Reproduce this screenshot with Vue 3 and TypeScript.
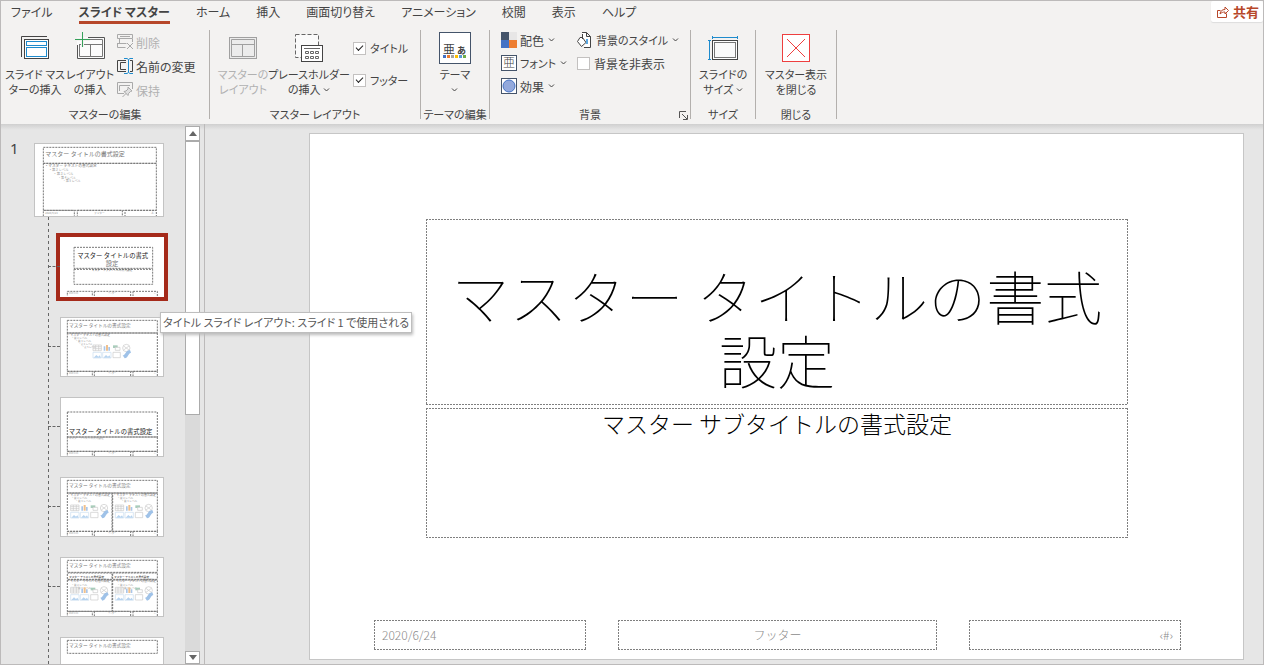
<script setup lang="ts">
import { ref } from 'vue'

interface Line { x: number; y: number; size: number; text: string; anchor?: 'start' | 'middle' | 'end'; tone?: string }
interface Box { x: number; y: number; w: number; h: number }
interface Layout { id: string; boxes: Box[]; lines: Line[]; media: { x: number; y: number }[] }

const tabs = ['ファイル', 'スライド マスター', 'ホーム', '挿入', '画面切り替え', 'アニメーション', '校閲', '表示', 'ヘルプ']
const activeTab = ref('スライド マスター')
const showTitle = ref(true)
const showFooter = ref(true)
const hideBackground = ref(false)
const selected = ref('title')

const heading = 'マスター タイトルの書式設定'
const body = 'マスター テキストの書式設定'

const footerBoxes: Box[] = [
  { x: 22, y: 163, w: 75, h: 20 },
  { x: 103, y: 163, w: 109, h: 20 },
  { x: 219, y: 163, w: 73, h: 20 },
]
const footerLines: Line[] = [
  { x: 26, y: 172, size: 6, text: '2020/6/24', tone: 'faint' },
  { x: 156, y: 172, size: 6, text: 'フッター', anchor: 'middle', tone: 'faint' },
  { x: 288, y: 172, size: 6, text: '‹#›', anchor: 'end', tone: 'faint' },
]

function outline(x: number, y: number, levels: number): Line[] {
  const all: Line[] = [
    { x, y, size: 9, text: '・' + body },
    { x: x + 12, y: y + 10, size: 8, text: '・第 2 レベル', tone: 'faint' },
    { x: x + 24, y: y + 19, size: 8, text: '・第 3 レベル', tone: 'faint' },
    { x: x + 34, y: y + 28, size: 7, text: '・第 4 レベル', tone: 'faint' },
    { x: x + 44, y: y + 37, size: 7, text: '・第 5 レベル', tone: 'faint' },
  ]
  return all.slice(0, levels)
}

const layouts: Layout[] = [
  {
    id: 'title',
    boxes: [{ x: 42, y: 31, w: 236, h: 63 }, { x: 42, y: 97, w: 236, h: 45 }, ...footerBoxes],
    lines: [
      { x: 158, y: 64, size: 19, text: 'マスター タイトルの書式', anchor: 'middle', tone: 'strong' },
      { x: 156, y: 88, size: 19, text: '設定', anchor: 'middle' },
      { x: 156, y: 102, size: 8, text: 'マスター サブタイトルの書式設定', anchor: 'middle' },
      ...footerLines,
    ],
    media: [],
  },
  {
    id: 'content',
    boxes: [{ x: 22, y: 10, w: 270, h: 38 }, { x: 22, y: 48, w: 270, h: 115 }, ...footerBoxes],
    lines: [{ x: 27, y: 30, size: 14, text: heading }, ...outline(22, 57, 5), ...footerLines],
    media: [{ x: 98, y: 83 }],
  },
  {
    id: 'section',
    boxes: [{ x: 22, y: 45, w: 270, h: 75 }, { x: 22, y: 120, w: 270, h: 43 }, ...footerBoxes],
    lines: [
      { x: 26, y: 111, size: 19, text: heading, tone: 'strong' },
      { x: 26, y: 127, size: 8, text: body, tone: 'faint' },
      ...footerLines,
    ],
    media: [],
  },
  {
    id: 'two',
    boxes: [{ x: 22, y: 10, w: 270, h: 38 }, { x: 22, y: 48, w: 134, h: 115 }, { x: 158, y: 48, w: 134, h: 115 }, ...footerBoxes],
    lines: [{ x: 27, y: 30, size: 14, text: heading }, ...outline(22, 57, 3), ...outline(160, 57, 3), ...footerLines],
    media: [{ x: 31, y: 83 }, { x: 165, y: 83 }],
  },
  {
    id: 'compare',
    boxes: [
      { x: 22, y: 10, w: 270, h: 36 },
      { x: 22, y: 48, w: 134, h: 19 }, { x: 158, y: 48, w: 134, h: 19 },
      { x: 22, y: 69, w: 134, h: 94 }, { x: 158, y: 69, w: 134, h: 94 }, ...footerBoxes,
    ],
    lines: [
      { x: 27, y: 30, size: 14, text: heading },
      { x: 27, y: 63, size: 8, text: body, tone: 'strong' },
      { x: 162, y: 63, size: 8, text: body, tone: 'strong' },
      ...outline(22, 76, 3), ...outline(160, 76, 3), ...footerLines,
    ],
    media: [{ x: 31, y: 90 }, { x: 165, y: 90 }],
  },
  {
    id: 'titleonly',
    boxes: [{ x: 22, y: 10, w: 270, h: 39 }, ...footerBoxes],
    lines: [{ x: 27, y: 30, size: 14, text: heading }],
    media: [],
  },
]

const masterBoxes: Box[] = [
  { x: 28, y: 13, w: 339, h: 48 },
  { x: 28, y: 61, w: 339, h: 141 },
  { x: 28, y: 202, w: 93, h: 24 },
  { x: 130, y: 202, w: 135, h: 24 },
  { x: 273, y: 202, w: 94, h: 24 },
]
const masterLines: Line[] = [
  { x: 34, y: 39, size: 18, text: heading },
  { x: 32, y: 72, size: 11, text: '・' + body },
  { x: 44, y: 84, size: 10, text: '・第 2 レベル', tone: 'faint' },
  { x: 58, y: 96, size: 10, text: '・第 3 レベル', tone: 'faint' },
  { x: 72, y: 108, size: 9, text: '・第 4 レベル', tone: 'faint' },
  { x: 86, y: 118, size: 9, text: '・第 5 レベル', tone: 'faint' },
  { x: 34, y: 213, size: 8, text: '2020/6/24', tone: 'faint' },
  { x: 196, y: 213, size: 8, text: 'フッター', anchor: 'middle', tone: 'faint' },
  { x: 360, y: 213, size: 8, text: '‹#›', anchor: 'end', tone: 'faint' },
]
</script>

<template>
  <div class="app">
    <header class="ribbon">
      <div class="tabbar">
        <nav class="tabs">
          <button v-for="t in tabs" :key="t" class="tab" :class="{ active: t === activeTab }" @click="activeTab = t">{{ t }}</button>
        </nav>
        <button class="share">
          <svg width="12" height="12" viewBox="0 0 12 12" fill="none" stroke="currentColor"><path d="M3.5 4.5h-3v7h9v-4M3 8c.5-3 2-4.500 5-4.500V1l3.500 3.500L8 8V6C6 6 4.500 6.500 3 8z" /></svg>
          <span>共有</span>
        </button>
      </div>

      <div class="groups">
        <section class="group g-edit">
          <div class="tools">
            <button class="big">
              <svg class="ico" viewBox="0 0 30 30" fill="none">
                <path d="M1.500 25V4.500H27" stroke="#444" />
                <rect x="4.500" y="7.500" width="24" height="19" fill="#fff" stroke="#444" />
                <rect x="6.500" y="9.500" width="20" height="4" stroke="#1e8bcd" />
                <rect x="6.500" y="15.500" width="20" height="9" stroke="#1e8bcd" />
              </svg>
              <span>スライド マス<br>ターの挿入</span>
            </button>
            <button class="big narrow">
              <svg class="ico" viewBox="0 0 30 30" fill="none">
                <rect x="2" y="5" width="28" height="22" fill="#fbfbfb" />
                <path d="M13 5.500h16.500v21H2.500V13" stroke="#555" />
                <path d="M10 7.500h17.500v17h-23V12M4 12.500h24M15.500 12.500v12" stroke="#777" />
                <path d="M7.500 0v15M0 7.500h15" stroke="#f3f2f1" stroke-width="3" />
                <path d="M7.500 0v15M0 7.500h15" stroke="#35a05a" />
              </svg>
              <span>レイアウト<br>の挿入</span>
            </button>
            <div class="stack wide">
              <button class="small" disabled>
                <svg class="mini" viewBox="0 0 16 16" fill="none" stroke="#a9a9a9"><path d="M.5.500h15v4H.5zM3 2.500h10M2.500 5v4M15.500 5v3M.5 9.500h9M.5 9v4.500h8M10 9l6 6M16 9l-6 6" /></svg>
                削除
              </button>
              <button class="small">
                <svg class="mini" viewBox="0 0 16 16" fill="none"><path d="M9 2.500H.5v11H9M9 4.500H3.500v7H9M13 2.500h2.500v11H13" stroke="#444" /><path d="M7 .5h3l1.500 1 1.500-1h3M11.500 1.500v13M7 15.500h3l1.500-1 1.500 1h3" stroke="#1e8bcd" /></svg>
                名前の変更
              </button>
              <button class="small" disabled>
                <svg class="mini" viewBox="0 0 16 16" fill="none" stroke="#a9a9a9"><path d="M7 11.500H.5V.500h15V7M2.500 9V3.500H13" /><path d="M11 5l4 4-1.500.500-2 2-.5 2-4-4 2-.500 2-2zM9 11.500L5.500 15" fill="#e0e0e0" /></svg>
                保持
              </button>
            </div>
          </div>
          <h2 class="caption">マスターの編集</h2>
        </section>

        <section class="group g-layout">
          <div class="tools">
            <button class="big" disabled>
              <svg class="ico" viewBox="0 0 30 30" fill="none" stroke="#a0a0a0">
                <rect x="1.500" y="5.500" width="27" height="21" fill="#ececec" />
                <path d="M3.500 7.500h23v17h-23zM3.500 12.500h23M14.500 12.500v12" />
              </svg>
              <span>マスターの<br>レイアウト</span>
            </button>
            <button class="big holder">
              <svg class="ico" viewBox="0 0 30 30" fill="none">
                <rect x="1.500" y="2.500" width="23" height="23" fill="#fafafa" stroke="#666" stroke-dasharray="4 2" />
                <rect x="7.500" y="13.500" width="21" height="16" fill="#fff" stroke="#444" />
                <path d="M10 16.500h16" stroke="#666" />
                <path d="M11.500 19.500h3v2h-3zM16.500 19.500h3v2h-3zM21.500 19.500h3v2h-3zM11.500 24.500h3v2h-3zM16.500 24.500h3v2h-3zM21.500 24.500h3v2h-3z" stroke="#666" />
              </svg>
              <span>プレースホルダー<br>の挿入 <svg class="chev" viewBox="0 0 7 4"><path d="M1 .5l2.500 2.500L6 .5" /></svg></span>
            </button>
            <div class="checks">
              <label class="check"><input v-model="showTitle" type="checkbox">タイトル</label>
              <label class="check"><input v-model="showFooter" type="checkbox">フッター</label>
            </div>
          </div>
          <h2 class="caption">マスター レイアウト</h2>
        </section>

        <section class="group g-theme">
          <div class="tools center">
            <button class="big">
              <svg class="ico theme" viewBox="0 0 32 32">
                <rect x=".5" y=".5" width="31" height="31" fill="#fff" stroke="#44546a" />
                <text x="4" y="22" font-size="12" fill="#444">亜</text>
                <text x="18" y="22" font-size="9" font-weight="700" fill="#444">あ</text>
                <path d="M4 23h3v3H4z" fill="#4472c4" /><path d="M8 23h3v3H8z" fill="#ed7d31" /><path d="M12 23h3v3h-3z" fill="#a5a5a5" /><path d="M16 23h3v3h-3z" fill="#ffc000" /><path d="M20 23h3v3h-3z" fill="#5b9bd5" /><path d="M24 23h3v3h-3z" fill="#70ad47" />
              </svg>
              <span>テーマ<br><svg class="chev" viewBox="0 0 7 4"><path d="M1 .5l2.500 2.500L6 .5" /></svg></span>
            </button>
          </div>
          <h2 class="caption">テーマの編集</h2>
        </section>

        <section class="group g-back">
          <div class="tools">
            <div class="stack tight">
              <button class="small">
                <svg class="mini" viewBox="0 0 16 16"><path d="M0 0h8v8H0z" fill="#44546a" /><path d="M8 0h8v8H8z" fill="#e7e6e6" /><path d="M0 8h8v8H0z" fill="#4472c4" /><path d="M8 8h8v8H8z" fill="#ed7d31" /></svg>
                配色 <svg class="chev" viewBox="0 0 7 4"><path d="M1 .5l2.500 2.500L6 .5" /></svg>
              </button>
              <button class="small kana">
                <svg class="mini" viewBox="0 0 16 16"><rect x=".5" y=".5" width="15" height="15" fill="#fff" stroke="#44546a" /><text x="2" y="12" font-size="12" font-weight="300" fill="#444">亜</text></svg>
                フォント <svg class="chev" viewBox="0 0 7 4"><path d="M1 .5l2.500 2.500L6 .5" /></svg>
              </button>
              <button class="small">
                <svg class="mini" viewBox="0 0 16 16"><rect x=".5" y=".5" width="15" height="15" fill="#fff" stroke="#44546a" /><circle cx="8" cy="8" r="6" fill="#93a9dc" stroke="#4472c4" /></svg>
                効果 <svg class="chev" viewBox="0 0 7 4"><path d="M1 .5l2.500 2.500L6 .5" /></svg>
              </button>
            </div>
            <div class="stack tight second">
              <button class="small kana">
                <svg class="mini" viewBox="0 0 16 16" fill="none" stroke="#444"><path d="M5 .5h4.500l4 4v11H7M9.500.500v4h4" fill="#fff" /><path d="M5.500 2v5M3 5.500L.5 9.500l4 5 4.500-4-3.500-5z" fill="#fff" /><path d="M10 7v5" stroke="#5aa7e0" stroke-width="2" /></svg>
                背景のスタイル <svg class="chev" viewBox="0 0 7 4"><path d="M1 .5l2.500 2.500L6 .5" /></svg>
              </button>
              <label class="check"><input v-model="hideBackground" type="checkbox">背景を非表示</label>
            </div>
          </div>
          <h2 class="caption">背景</h2>
          <button class="launcher" aria-label="背景の書式設定">
            <svg width="9" height="9" viewBox="0 0 9 9" fill="none" stroke="#555"><path d="M.5 7V.500H7M3 3l5 5M8.500 4v4.500H4" /></svg>
          </button>
        </section>

        <section class="group g-size">
          <div class="tools center">
            <button class="big">
              <svg class="ico" viewBox="0 0 30 30" fill="none">
                <path d="M4.500 4v3M29.500 4v3M4 5.500h26M0 8.500h3M0 27.500h3M1.500 8v20" stroke="#1e8bcd" />
                <rect x="4.500" y="8.500" width="25" height="19" fill="#fff" stroke="#444" />
                <rect x="6.500" y="10.500" width="21" height="15" fill="#fafafa" stroke="#777" />
              </svg>
              <span>スライドの<br>サイズ <svg class="chev" viewBox="0 0 7 4"><path d="M1 .5l2.500 2.500L6 .5" /></svg></span>
            </button>
          </div>
          <h2 class="caption">サイズ</h2>
        </section>

        <section class="group g-close">
          <div class="tools center">
            <button class="big">
              <svg class="ico" viewBox="0 0 30 30" fill="none" stroke="#ee3f3f">
                <rect x="1.500" y="2.500" width="27" height="27" fill="#fff" />
                <path d="M6 7l18 18M24 7L6 25" />
              </svg>
              <span>マスター表示<br>を閉じる</span>
            </button>
          </div>
          <h2 class="caption">閉じる</h2>
        </section>
      </div>
    </header>

    <main class="work">
      <aside class="pane">
        <div class="thumbs">
          <div class="master-row">
            <span class="num">1</span>
            <button class="thumb master" aria-label="スライド マスター">
              <svg viewBox="3 3 384 216">
                <rect v-for="(b, i) in masterBoxes" :key="i" class="ph" :x="b.x" :y="b.y" :width="b.w" :height="b.h" />
                <text v-for="(l, i) in masterLines" :key="'l' + i" :x="l.x" :y="l.y" :font-size="l.size" :text-anchor="l.anchor" :class="l.tone">{{ l.text }}</text>
              </svg>
            </button>
          </div>
          <ul class="layouts">
            <li v-for="lay in layouts" :key="lay.id">
              <button class="thumb" :class="{ selected: lay.id === selected }" :aria-label="lay.id" @click="selected = lay.id">
                <svg viewBox="3 3 306 174">
                  <rect v-for="(b, i) in lay.boxes" :key="i" class="ph" :x="b.x" :y="b.y" :width="b.w" :height="b.h" />
                  <text v-for="(l, i) in lay.lines" :key="'l' + i" :x="l.x" :y="l.y" :font-size="l.size" :text-anchor="l.anchor" :class="l.tone">{{ l.text }}</text>
                  <g v-for="(m, i) in lay.media" :key="'m' + i" :transform="`translate(${m.x} ${m.y})`" class="media">
                    <path d="M1 1h25v17H1zM1 6h25M1 12h25M9 1v17M18 1v17" stroke="#c8c8c8" />
                    <path d="M33 5h5v13h-5zM47 7h5v11h-5z" fill="#a9c6ea" /><path d="M40 1h6v17h-6z" fill="#f0c08c" />
                    <path d="M61 2h14v8H61z" fill="#a9cdbb" /><path d="M68 8h14v9H68z" stroke="#c8c8c8" fill="#fff" />
                    <circle cx="101" cy="10" r="11" stroke="#c8c8c8" /><path d="M93 4l16 12M109 4L93 16" stroke="#c8c8c8" />
                    <path d="M1 23h25v17H1zM30 23h25v17H30z" stroke="#c9dcef" /><path d="M3 39l8-8 6 5 4-4 4 7zM32 39l8-8 6 5 4-4 4 7z" fill="#b7d3ef" />
                    <path d="M61 23h22v16H61z" stroke="#c8c8c8" />
                    <path d="M90 32c10 0 6-14 22-16l3 8c-10 3-8 16-19 17z" fill="#9fc2e8" />
                  </g>
                </svg>
              </button>
            </li>
          </ul>
        </div>
        <div class="scroll" aria-hidden="true">
          <span class="arrow"><svg width="8" height="5" viewBox="0 0 8 5"><path d="M4 0l4 5H0z" /></svg></span>
          <span class="grip"></span>
          <span class="arrow end"><svg width="8" height="5" viewBox="0 0 8 5"><path d="M4 5L0 0h8z" /></svg></span>
        </div>
        <div class="tip" role="tooltip">タイトル スライド レイアウト: スライド 1 で使用される</div>
      </aside>

      <section class="canvas">
        <article class="slide">
          <div class="frame title"><h1>マスター タイトルの書式設定</h1></div>
          <div class="frame subtitle">マスター サブタイトルの書式設定</div>
          <footer class="foot">
            <div class="frame">2020/6/24</div>
            <div class="frame mid">フッター</div>
            <div class="frame last">‹#›</div>
          </footer>
        </article>
      </section>
    </main>
  </div>
</template>

<style>
body { margin: 0; }
</style>

<style scoped>
.app {
  box-sizing: border-box;
  display: flex;
  flex-direction: column;
  height: 100vh;
  overflow: hidden;
  border: 1px solid #bcbaba;
  background: #e6e6e6;
  color: #444;
  font: 12px/15px "Noto Sans CJK JP", sans-serif;
  font-feature-settings: "palt";
}
button {
  margin: 0;
  padding: 0;
  border: 0;
  background: none;
  color: inherit;
  font: inherit;
  font-feature-settings: inherit;
}
button:disabled { color: #b1b1b1; }
h1, h2, ul { margin: 0; padding: 0; font-weight: 400; }
.ribbon { flex: none; background: #f3f2f1; }
.tabbar { display: flex; justify-content: space-between; height: 24px; }
.tabs { display: flex; align-items: flex-start; gap: 26px; padding-left: 10px; }
.tab { height: 23px; white-space: nowrap; box-sizing: border-box; border-bottom: 3px solid transparent; }
.tab.active { border-color: #b7472a; font-weight: 700; }
.share {
  display: flex;
  align-items: center;
  gap: 4px;
  height: 21px;
  padding: 0 4px 0 6px;
  border-radius: 2px;
  background: #fff;
  box-shadow: 0 1px 1px #ddd;
  color: #b7472a;
  font-size: 13px;
  font-weight: 700;
}
.groups { display: flex; height: 99px; }
.group {
  position: relative;
  box-sizing: border-box;
  display: flex;
  flex-direction: column;
  margin: 5px 0;
  border-right: 1px solid #b3b0ad;
}
.g-edit { width: 209px; }
.g-layout { width: 211px; }
.g-theme { width: 69px; }
.g-back { width: 201px; }
.g-size { width: 65px; }
.g-close { width: 81px; }
.tools { display: flex; flex: 1; padding-top: 2px; }
.g-edit .tools { padding-left: 6px; }
.g-layout .tools { padding-left: 5px; }
.g-back .tools { padding-left: 11px; }
.tools.center { justify-content: center; }
.caption { margin-bottom: -3px; font-size: 11px; line-height: 15px; text-align: center; white-space: nowrap; }
.big { display: flex; flex-direction: column; align-items: center; width: 56px; height: 66px; gap: 5px; font-size: 11px; white-space: nowrap; }
.big.holder { width: 76px; }
.big.narrow { width: 54px; }
.big span { display: block; }
.ico { width: 30px; height: 30px; flex: none; overflow: visible; }
.ico.theme { width: 32px; height: 32px; margin-bottom: -2px; }
.chev { width: 7px; height: 4px; fill: none; stroke: #444; vertical-align: 2px; }
.stack { display: flex; flex-direction: column; align-items: flex-start; }
.stack.wide { gap: 8px; padding-top: 2px; }
.stack.tight { gap: 7px; }
.stack.second { margin-left: 10px; }
.small { display: flex; align-items: center; gap: 3px; height: 16px; white-space: nowrap; }
.small.kana { font-size: 11px; }
.small .chev { margin-left: 1px; }
.mini { width: 16px; height: 16px; flex: none; overflow: visible; }
.checks { display: flex; flex-direction: column; gap: 16px; padding: 8px 0 0 6px; font-size: 11px; }
.check { display: flex; align-items: center; gap: 4px; height: 16px; white-space: nowrap; }
.check input {
  appearance: none;
  display: grid;
  place-items: center;
  width: 13px;
  height: 13px;
  margin: 0;
  border: 1px solid #c3c1c0;
  background: #fff;
  box-sizing: border-box;
}
.check input:checked::before {
  content: "";
  width: 6px;
  height: 3px;
  margin-bottom: 2px;
  border-left: 1px solid #222;
  border-bottom: 1px solid #222;
  rotate: -45deg;
}
.launcher { position: absolute; right: 2px; bottom: -1px; display: flex; }

.work {
  display: flex;
  flex: 1;
  min-height: 0;
  background: linear-gradient(#cfcfcf, #e6e6e6 6px);
}
.pane {
  position: relative;
  box-sizing: border-box;
  display: flex;
  width: 204px;
  flex: none;
  border-right: 1px solid #bcbaba;
}
.thumbs { flex: 1; overflow: hidden; padding-top: 19px; }
.master-row { display: flex; }
.num { width: 24px; padding: 0 0 0 9px; box-sizing: border-box; margin-right: 9px; font: 15px/11px "Noto Sans", sans-serif; }
.thumb {
  display: block;
  box-sizing: border-box;
  width: 104px;
  height: 60px;
  border: 1px solid #c3c3c3;
  background: #fff;
  font-feature-settings: normal;
}
.thumb.master { width: 130px; height: 74px; }
.thumb.selected { border-color: #fff; outline: 4px solid #a52a1a; }
.thumb svg { display: block; width: 100%; height: 100%; overflow: hidden; }
.thumb text { fill: #777; }
.thumb text.strong { fill: #222; }
.thumb text.faint { fill: #999; }
.ph { fill: none; stroke: #777; stroke-width: 3; stroke-dasharray: 6 3; }
.media { fill: none; stroke-width: 2; }
.layouts {
  display: flex;
  flex-direction: column;
  gap: 20px;
  margin-left: 47px;
  padding: 20px 0 0 12px;
  background: repeating-linear-gradient(#666 0 3px, transparent 3px 6px) 0 0 / 1px 100% no-repeat;
  list-style: none;
}
.layouts li { position: relative; }
.layouts li::before {
  content: "";
  position: absolute;
  top: 29px;
  left: -12px;
  width: 12px;
  border-top: 1px dashed #666;
}
.scroll { display: flex; flex-direction: column; width: 15px; margin: 2px 4px 0 0; background: #dadada; }
.arrow {
  display: grid;
  place-items: center;
  box-sizing: border-box;
  height: 15px;
  border: 1px solid #ababab;
  background: #fff;
  fill: #666;
}
.arrow.end { height: 13px; margin-top: auto; }
.grip { box-sizing: border-box; height: 51%; border: 1px solid #ababab; background: #fff; }
.tip {
  position: absolute;
  top: 188px;
  left: 159px;
  z-index: 2;
  padding: 2px;
  border: 1px solid #bebebe;
  background: #fff;
  box-shadow: 1px 2px 3px #bbb;
  color: #575757;
  font-size: 11px;
  white-space: nowrap;
}
.canvas { flex: 1; display: flex; min-width: 0; padding: 9px 19px 4px 104px; }
.slide {
  flex: 1;
  display: flex;
  flex-direction: column;
  box-sizing: border-box;
  min-width: 0;
  padding: 85px 0 9px;
  border: 1px solid #c6c6c6;
  background: #fff;
  font-feature-settings: normal;
}
.frame {
  box-sizing: border-box;
  padding: 1px;
  background:
    repeating-linear-gradient(90deg, #7f7f7f 0 2px, transparent 2px 3px) 0 0 / 100% 1px no-repeat,
    repeating-linear-gradient(90deg, #7f7f7f 0 2px, transparent 2px 3px) 0 100% / 100% 1px no-repeat,
    repeating-linear-gradient(#7f7f7f 0 2px, transparent 2px 3px) 0 0 / 1px 100% no-repeat,
    repeating-linear-gradient(#7f7f7f 0 2px, transparent 2px 3px) 100% 0 / 1px 100% no-repeat;
}
.title {
  display: flex;
  align-items: flex-end;
  height: 186px;
  margin: 0 115px 0 116px;
  padding: 0 8px 14px;
  color: #000;
}
.title h1 { flex: 1; font-size: 58px; font-weight: 100; line-height: 64px; text-align: center; }
.subtitle {
  height: 130px;
  margin: 3px 115px 0 116px;
  color: #000;
  font-size: 23px;
  font-weight: 300;
  line-height: 28px;
  text-align: center;
}
.foot { display: grid; grid-template-columns: 212fr 318fr 212fr; gap: 32px; margin: auto 62px 0 64px; color: #8b8b8b; }
.foot .frame { height: 30px; padding: 0 8px; line-height: 29px; font-weight: 300; }
.foot .mid { text-align: center; }
.foot .last { text-align: right; }
</style>
